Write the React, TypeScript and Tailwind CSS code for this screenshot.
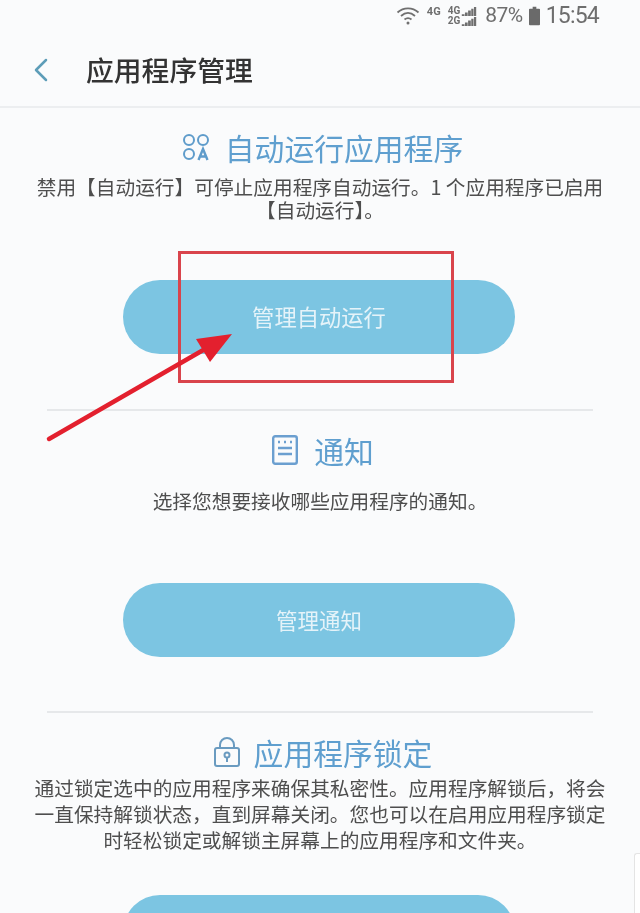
import { ChevronLeft } from 'lucide-react';

const cjk = { fontFamily: '"Noto Sans CJK SC", "Noto Sans", sans-serif' };

function WifiIcon() {
  return (
    <svg viewBox="0 0 24 20" className="w-[24px] h-[20px]" fill="none" stroke="#707070" strokeWidth="1.8">
      <path d="M1.5 7.5C7.5 2 16.5 2 22.5 7.5" />
      <path d="M5 11c4.5-4 9.5-4 14 0" />
      <path d="M8.5 14.5c2.5-2 4.500-2 7 0" />
      <circle cx="12" cy="18" r="1.500" fill="#707070" stroke="none" />
    </svg>
  );
}

function SignalBars() {
  return (
    <svg viewBox="0 0 16 10" className="w-[16px] h-[9px]" fill="#6f6f6f">
      <path d="M0 10h3V8H0zM3.500 10h3V6h-3zM7 10h3V4H7zM10.500 10h2.500V2h-2.500zM13.500 10h2.500V0h-2.500z" />
    </svg>
  );
}

function StatusBar() {
  return (
    <div className="h-[31px] flex items-center justify-end pr-[41px] text-[#6e6e6e]" style={{ fontFamily: '"Roboto", sans-serif' }}>
      <div className="mr-[7px] mt-[-1px]"><WifiIcon /></div>
      <span className="text-[11px] font-bold mr-[7px] mb-[6px]">4G</span>
      <div className="flex flex-col mr-[8px] text-[10px] font-bold leading-[10px]">
        <div className="flex items-end gap-[1px]"><span>4G</span><SignalBars /></div>
        <div className="flex items-end gap-[1px]"><span>2G</span><SignalBars /></div>
      </div>
      <span className="text-[21px] mr-[6px] leading-none tracking-[-0.5px]">87%</span>
      <svg viewBox="0 0 12 20" className="w-[11px] h-[20px] mr-[6px]" fill="#6a6a6a">
        <path d="M4 0h4v2h3a1 1 0 0 1 1 1v16a1 1 0 0 1-1 1H1a1 1 0 0 1-1-1V3a1 1 0 0 1 1-1h3z" />
      </svg>
      <span className="text-[23px] leading-none tracking-[-0.8px]">15:54</span>
    </div>
  );
}

function Header() {
  return (
    <div className="h-[77px] pt-[3px] flex items-center border-b-2 border-[#eceef0]">
      <ChevronLeft className="w-[40px] h-[40px] ml-[21px] text-[#5d9db8]" strokeWidth={1.5} />
      <span className="ml-[25px] text-[27.800px] font-medium text-[#333333]">应用程序管理</span>
    </div>
  );
}

function AutoIcon() {
  return (
    <svg viewBox="0 0 30 30" className="w-[30px] h-[30px]" fill="none" stroke="#5f9ccb" strokeWidth="2">
      <circle cx="8" cy="8" r="5" />
      <circle cx="22" cy="8" r="5" />
      <circle cx="8" cy="22" r="5" />
      <path d="M17.500 28l4.500-11 4.500 11M19 24.500h6" strokeWidth="2.400" />
    </svg>
  );
}

function BellIcon() {
  return (
    <svg viewBox="0 0 26 30" className="w-[26px] h-[30px]" fill="none" stroke="#6b9fd0" strokeWidth="2.400">
      <rect x="1.200" y="1.200" width="23.600" height="27.600" rx="2" />
      <path d="M6 13h14M6 19h14" />
      <path d="M6 7h2M12 7h2M18 7h2" />
    </svg>
  );
}

function LockIcon() {
  return (
    <svg viewBox="0 0 26 30" className="w-[26px] h-[30px]" fill="none" stroke="#6a9bc0" strokeWidth="2">
      <rect x="1" y="11" width="24" height="18" rx="2" />
      <path d="M6 11V8a7 7 0 0 1 14 0v3" />
      <circle cx="13" cy="18" r="2.500" />
      <path d="M13 20.500V25" />
    </svg>
  );
}

function Section({
  icon,
  title,
  head,
  children,
}: {
  icon: React.ReactNode;
  title: string;
  head: string;
  children: React.ReactNode;
}) {
  return (
    <div className="flex flex-col items-center">
      <div className={`flex items-center ${head}`}>
        {icon}
        <span className="text-[29.800px] leading-[40px] text-[#5f9fcf]">{title}</span>
      </div>
      {children}
    </div>
  );
}

function Pill({ label, size }: { label: string; size: string }) {
  return (
    <button className={`w-[392px] h-[74px] mr-[2px] shrink-0 rounded-full bg-[#7cc5e2] text-white/80 ${size}`}>{label}</button>
  );
}

export default function App() {
  return (
    <div className="relative w-[640px] h-[913px] overflow-hidden bg-[#fafbfc] blur-[0.4px]" style={cjk}>
      <StatusBar />
      <Header />

      <div className="pt-[19px]">
        <Section icon={<AutoIcon />} title="自动运行应用程序" head="gap-[14px] pl-[4px]">
          <p className="mt-[8px] text-center text-[19.700px] leading-[23px] text-[#4e4e4e]">
            禁用【自动运行】可停止应用程序自动运行。1 个应用程序已启用
            <br />
            【自动运行】。
          </p>
          <div className="mt-[59px]"><Pill label="管理自动运行" size="text-[22.300px]" /></div>
        </Section>

        <div className="mx-[47px] mt-[55px] h-[2px] bg-[#e6e8ea]" />

        <div className="pt-[19px]">
          <Section icon={<BellIcon />} title="通知" head="gap-[16px] pl-[6px]">
            <p className="mt-[18px] text-center text-[19.700px] leading-[26px] text-[#4e4e4e]">
              选择您想要接收哪些应用程序的通知。
            </p>
            <div className="mt-[69px]"><Pill label="管理通知" size="text-[21.500px]" /></div>
          </Section>
        </div>

        <div className="mx-[47px] mt-[54px] h-[2px] bg-[#e6e8ea]" />

        <div className="pt-[19px]">
          <Section icon={<LockIcon />} title="应用程序锁定" head="gap-[14px] pl-[6px]">
            <p className="mt-[3px] text-center text-[19.700px] leading-[26px] text-[#4e4e4e]">
              通过锁定选中的应用程序来确保其私密性。应用程序解锁后，将会
              <br />
              一直保持解锁状态，直到屏幕关闭。您也可以在启用应用程序锁定
              <br />
              时轻松锁定或解锁主屏幕上的应用程序和文件夹。
            </p>
            <div className="mt-[42px]"><Pill label="" size="text-[20px]" /></div>
          </Section>
        </div>
      </div>

      {/* annotation drawn over the screenshot */}
      <div className="absolute left-[178px] top-[251px] w-[276px] h-[132px] border-[3px] border-[#d9444c]" />
      <svg className="absolute left-0 top-0 w-[640px] h-[913px] pointer-events-none" viewBox="0 0 640 913" fill="none">
        <path d="M49 439L205 349" stroke="#e3202e" strokeWidth="4.500" strokeLinecap="round" />
        <path d="M196 339L232 334L210 362Z" fill="#e3202e" />
      </svg>
      <div className="absolute right-0 top-[853px] w-[6px] h-[60px] rounded-tl-[3px] border-l border-t border-[#e4e4e4] bg-white" />
    </div>
  );
}
